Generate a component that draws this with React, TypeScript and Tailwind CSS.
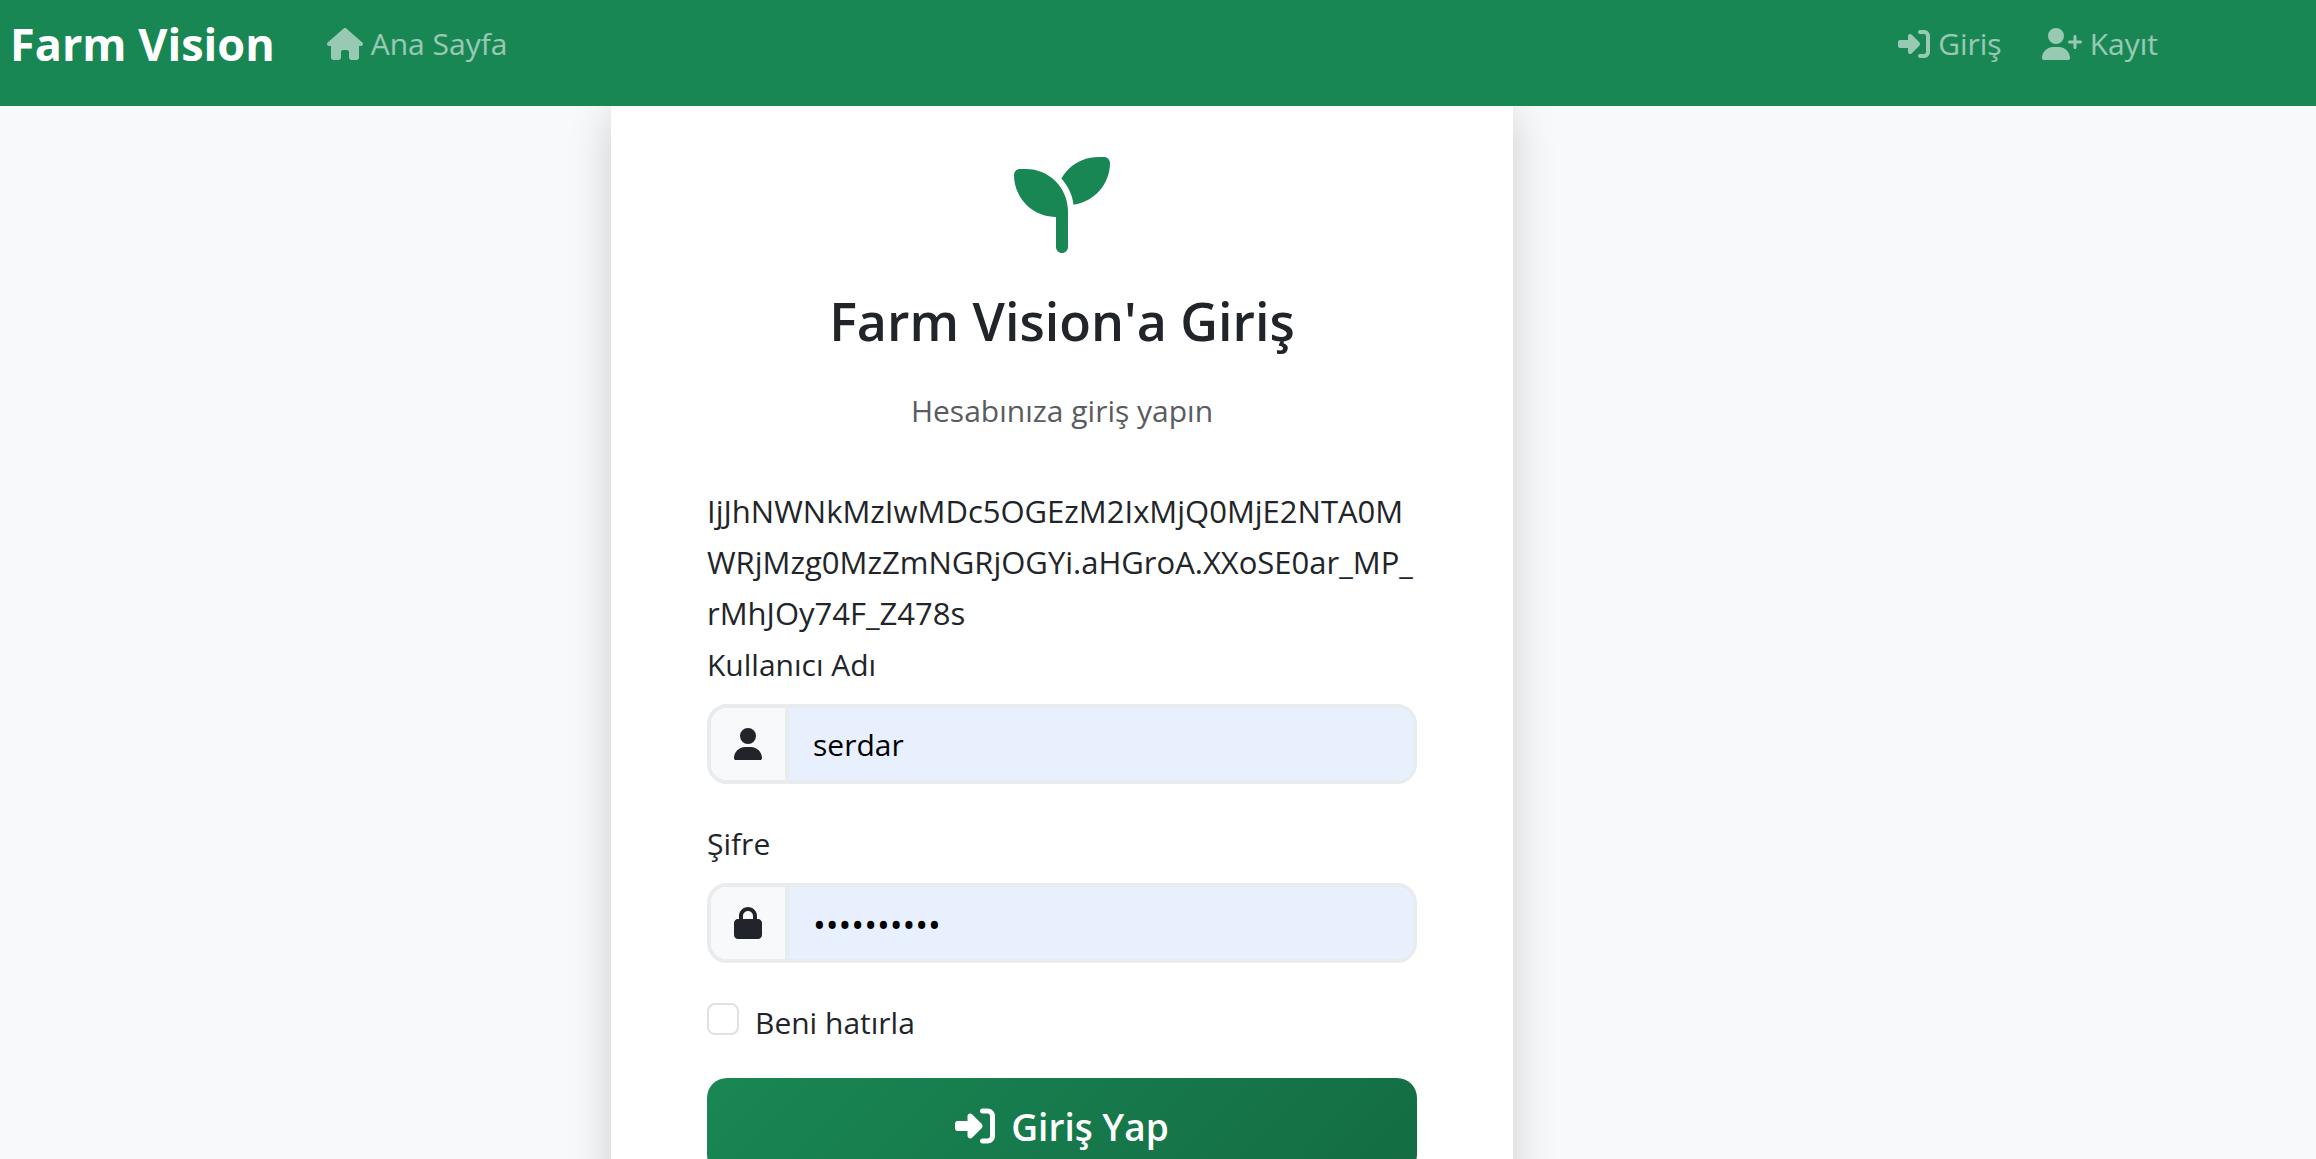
import { useState } from "react";
import type { ReactNode } from "react";
import {
  FaHouse,
  FaLock,
  FaRightToBracket,
  FaSeedling,
  FaUser,
  FaUserPlus,
} from "react-icons/fa6";

function NavLink({ icon, children }: { icon: ReactNode; children: ReactNode }) {
  return (
    <a href="#" className="flex items-center gap-2 text-white/55 hover:text-white/75">
      {icon}
      <span>{children}</span>
    </a>
  );
}

function Field({
  id,
  label,
  type,
  value,
  icon,
  inputSize,
  onChange,
}: {
  id: string;
  label: string;
  type: string;
  value: string;
  icon: ReactNode;
  inputSize: string;
  onChange: (value: string) => void;
}) {
  return (
    <div>
      <label htmlFor={id} className="mb-[14px] block">
        {label}
      </label>
      <div className="flex h-20 overflow-hidden rounded-[20px] border-4 border-[#e9ecef]">
        <span className="flex w-[78px] shrink-0 items-center justify-center border-r-4 border-[#e9ecef] bg-[#f8f9fa]">
          {icon}
        </span>
        <input
          id={id}
          type={type}
          value={value}
          onChange={(event) => onChange(event.target.value)}
          className={`min-w-0 flex-1 bg-[#e8f0fe] px-6 text-black outline-none ${inputSize}`}
        />
      </div>
    </div>
  );
}

export default function App() {
  const [username, setUsername] = useState("serdar");
  const [password, setPassword] = useState("serdar1234");

  return (
    <div className="flex h-screen flex-col overflow-hidden bg-[#f8f9fa] font-['Open_Sans',sans-serif] text-[30px] leading-[51px] text-[#212529]">
      <header className="relative z-10 bg-[#198754]">
        <nav className="flex h-[106px] items-start pt-[18px] pr-[158px] pl-[10px]">
          <a href="#" className="mr-[52px] text-[45px] font-bold text-white">
            Farm Vision
          </a>
          <NavLink icon={<FaHouse className="h-8 w-9" />}>Ana Sayfa</NavLink>
          <div className="ml-auto flex gap-10">
            <NavLink icon={<FaRightToBracket className="size-8" />}>Giriş</NavLink>
            <NavLink icon={<FaUserPlus className="h-8 w-10" />}>Kayıt</NavLink>
          </div>
        </nav>
      </header>

      <main className="-mt-2 flex justify-center pr-[192px]">
        <section className="w-full max-w-[902px] bg-white px-24 pt-[59px] pb-24 shadow-[0_16px_40px_rgba(0,0,0,0.18)]">
          <div className="flex flex-col items-center text-center">
            <FaSeedling className="size-24 text-[#198754]" />
            <h1 className="mt-8 text-[52px] leading-[72px] font-semibold">Farm Vision'a Giriş</h1>
            <p className="mt-7 text-[#595c5f]">Hesabınıza giriş yapın</p>
          </div>

          <form className="mt-[50px]" onSubmit={(event) => event.preventDefault()}>
            <p className="text-[31px]">
              IjJhNWNkMzIwMDc5OGEzM2IxMjQ0MjE2NTA0M
              <br />
              WRjMzg0MzZmNGRjOGYi.aHGroA.XXoSE0ar_MP_
              <br />
              rMhJOy74F_Z478s
            </p>
            <div className="flex flex-col gap-[34px]">
              <Field
                id="username"
                label="Kullanıcı Adı"
                type="text"
                value={username}
                onChange={setUsername}
                inputSize="text-[30px]"
                icon={<FaUser className="h-8 w-7" />}
              />
              <Field
                id="password"
                label="Şifre"
                type="password"
                value={password}
                onChange={setPassword}
                inputSize="pt-1 text-[34px]"
                icon={<FaLock className="h-8 w-7" />}
              />
            </div>
            <div className="mt-[34px] flex items-start gap-4">
              <input
                id="remember"
                type="checkbox"
                className="mt-[6px] size-8 appearance-none rounded-lg border-2 border-[#dee2e6] bg-white checked:bg-[#198754]"
              />
              <label htmlFor="remember">Beni hatırla</label>
            </div>
            <button
              type="submit"
              className="mt-[30px] flex h-24 w-full items-center justify-center gap-4 rounded-[20px] bg-linear-[135deg] from-[#198754] to-[#146c43] text-[37px] font-semibold text-white"
            >
              <FaRightToBracket className="size-10" />
              Giriş Yap
            </button>
          </form>
        </section>
      </main>
    </div>
  );
}
